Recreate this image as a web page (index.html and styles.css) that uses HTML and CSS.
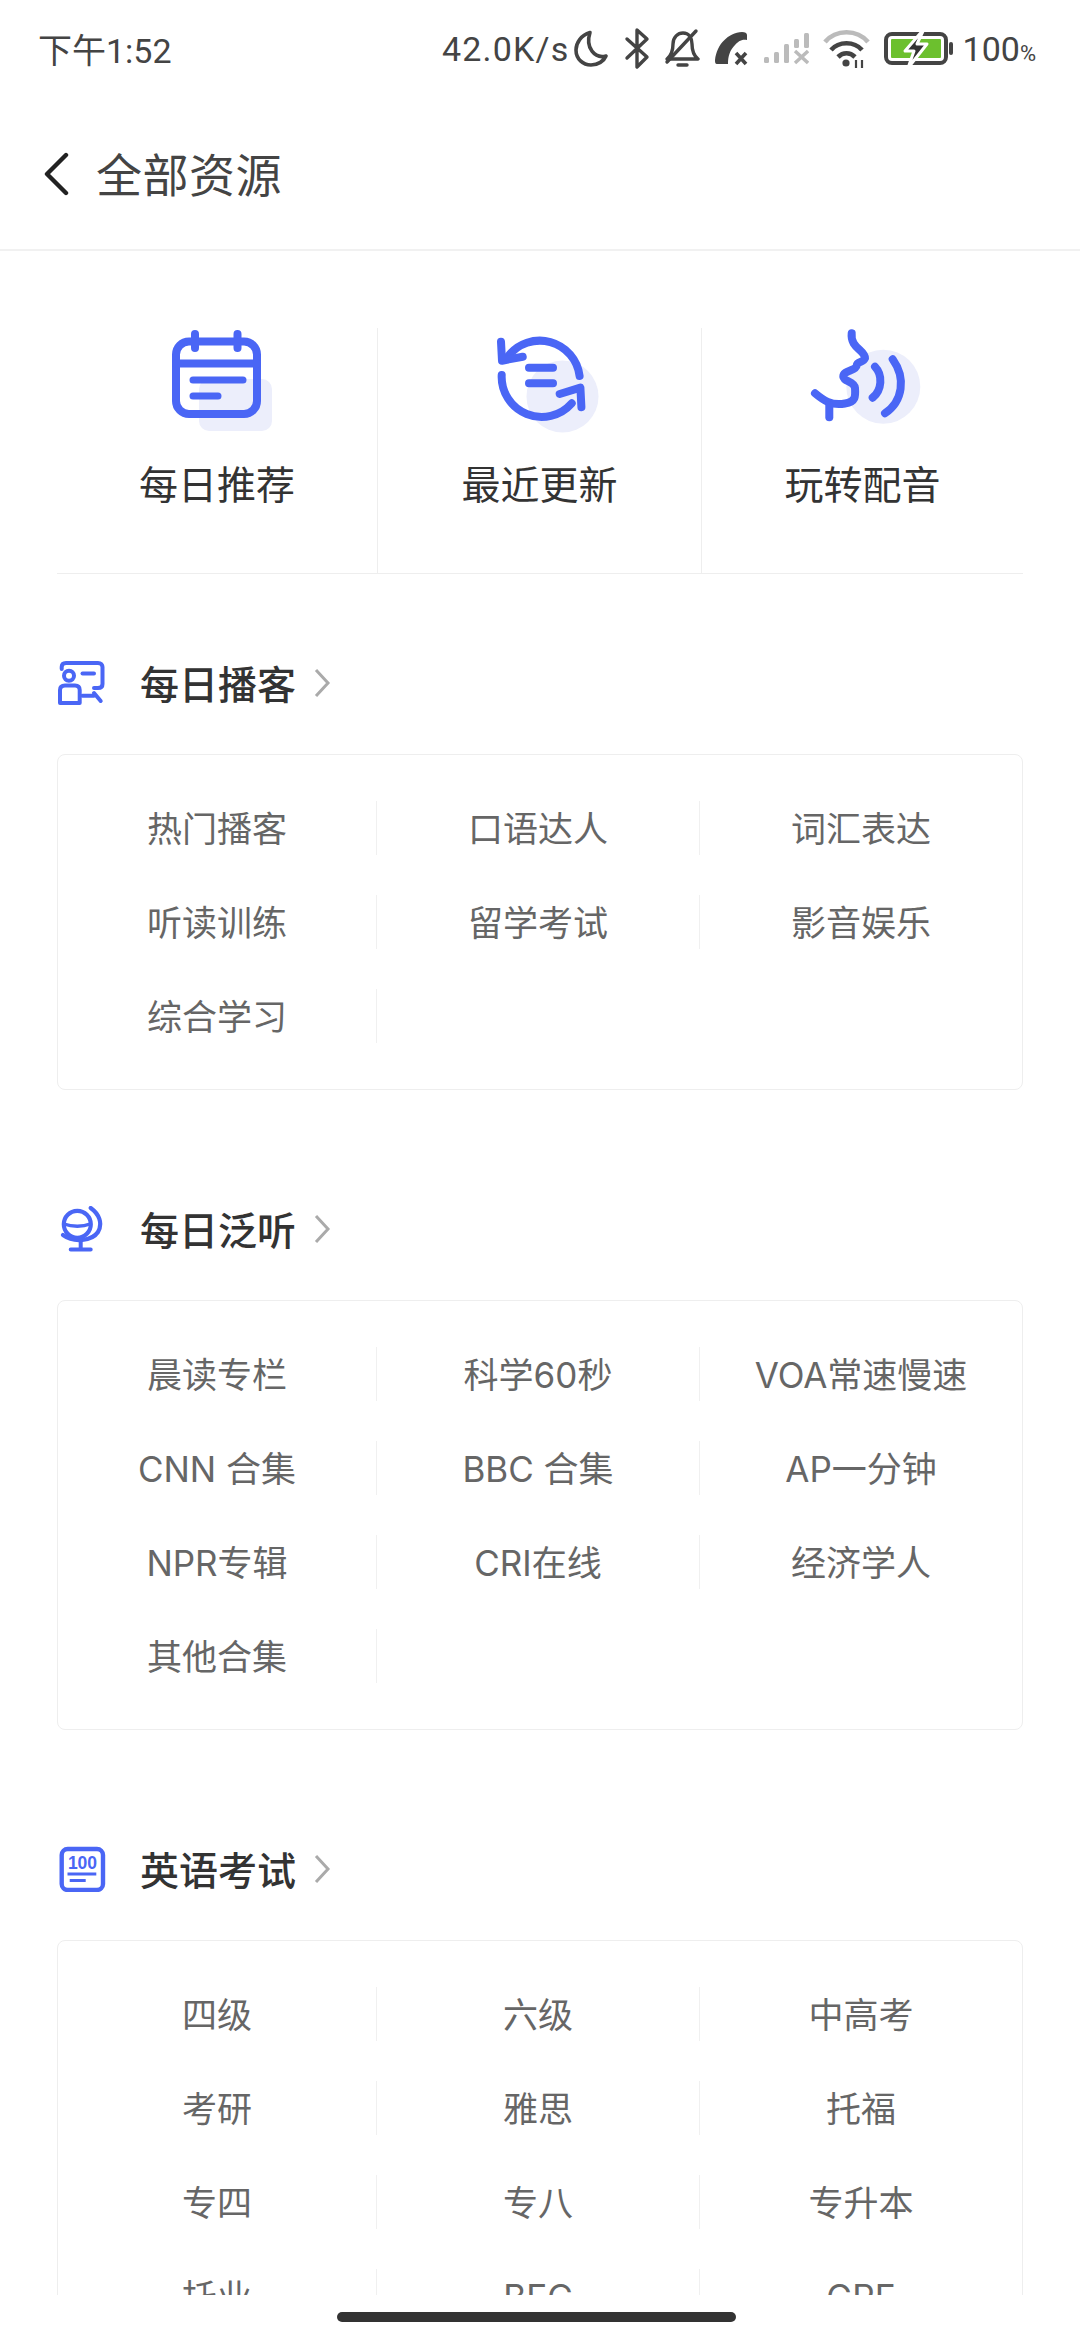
FILE: index.html
```html
<!DOCTYPE html>
<html lang="en">
<head>
    <meta charset="UTF-8">
    <meta name="viewport" content="width=device-width, initial-scale=1.0">
    <title>全部资源</title>
    <link rel="stylesheet" href="styles.css">
</head>
<body>
    <div class="status">
        <div class="time">下午1:52</div>
        <div class="status-right">
            <span class="speed">42.0K/s</span>
            <div class="status-icons">
                <svg width="37" height="50" viewBox="0 0 37 50"><path d="M17 8.5C8 11 3 19 3 26c0 9 7 15 15 15 7 0 13-4 15-9C22 35 12 24 17 8.5Z" fill="none" stroke="#444" stroke-width="3.6" stroke-linejoin="round"/></svg>
                <svg width="26" height="50" viewBox="0 0 26 50"><path d="M3 15 23 33 13 43V6L23 15 3 34" fill="none" stroke="#444" stroke-width="3.4" stroke-linejoin="round" stroke-linecap="round"/></svg>
                <svg width="36" height="50" viewBox="0 0 36 50"><path d="M3 35c5-4 6-9 6-15C9 13 14 9 19 9c6 0 9 5 9 11 0 6 1 11 6 15Z" fill="none" stroke="#444" stroke-width="3.4" stroke-linejoin="round"/><path d="M14 41h9" stroke="#444" stroke-width="3.4" stroke-linecap="round"/><path d="M3 38 32 7" stroke="#444" stroke-width="3.4" stroke-linecap="round"/></svg>
                <svg width="35" height="50" viewBox="0 0 35 50"><path d="M28 8C31 8 33 9 33 11V16C27 15 24 18 21 21 16 26 14 32 14 40H3C1 40 1 38 1 36 3 20 14 9 28 8Z" fill="#444"/><path d="M22 29 32 40M32 29 22 40" stroke="#444" stroke-width="3.6"/></svg>
                <svg width="46" height="50" viewBox="0 0 46 50"><g fill="#bbb"><rect x="1" y="33" width="5" height="6" rx="1.5"/><rect x="11" y="28" width="5" height="11" rx="1.5"/><rect x="21" y="20" width="5" height="19" rx="1.5"/><rect x="31" y="15" width="5" height="9" rx="1.5"/><rect x="41" y="9" width="5" height="15" rx="1.5"/></g><path d="M32 27 45 39M45 27 32 39" stroke="#bbb" stroke-width="3.4"/></svg>
                <svg width="47" height="50" viewBox="0 0 47 50"><g fill="none" stroke-width="4.600"><path d="M2 18C13 5 34 5 45 18" stroke="#bbb"/><path d="M8 26C16 17 31 17 39 26" stroke="#444"/><path d="M15 33C20 28 27 28 32 33" stroke="#444"/></g><circle cx="23" cy="39" r="3.6" fill="#444"/><path d="M33 36v8M39 36v8" stroke="#444" stroke-width="2.2"/></svg>
                <svg width="70" height="50" viewBox="0 0 70 50"><rect x="2" y="10" width="60" height="29" rx="6" fill="#fff" stroke="#444" stroke-width="4"/><rect x="7" y="15" width="50" height="19" rx="1" fill="#6cc02e"/><path d="M40 5 21 27h9l-6 17 19-24h-10Z" fill="#333" stroke="#fff" stroke-width="3" stroke-linejoin="round"/><rect x="65" y="18" width="4" height="13" rx="2" fill="#444"/></svg>
            </div>
            <span class="pct">100<small>%</small></span>
        </div>
    </div>

    <div class="nav">
        <svg class="back" width="26" height="44" viewBox="0 0 26 44"><path d="M23 3 4 22 23 41" fill="none" stroke="#222" stroke-width="4.4" stroke-linecap="round" stroke-linejoin="round"/></svg>
        <h1>全部资源</h1>
    </div>

    <div class="main">
        <div class="top-grid">
            <div class="top-item">
                <svg width="120" height="110" viewBox="0 0 120 110">
                    <rect x="42" y="51" width="73" height="52" rx="10" fill="#eceefb"/>
                    <g fill="none" stroke="#4a66f5" stroke-linecap="round">
                        <rect x="19" y="13.5" width="81" height="72.5" rx="13" stroke-width="8"/>
                        <path d="M38 6v14M80.500 6v14M19 35.500h81" stroke-width="8"/>
                        <path d="M36 52h50M36 68h25" stroke-width="7"/>
                    </g>
                </svg>
                <div class="top-label">每日推荐</div>
            </div>
            <div class="top-item">
                <svg width="120" height="110" viewBox="0 0 120 110">
                    <circle cx="82.500" cy="68.500" r="36" fill="#eceefb"/>
                    <g fill="none" stroke="#4a66f5" stroke-width="8" stroke-linecap="round" stroke-linejoin="round">
                        <path d="M28 28.500A40 40 0 0 1 99.600 48"/>
                        <path d="M21 13.700 22 32.700 42.700 28.700"/>
                        <path d="M21.700 47A40 40 0 0 0 91.700 75.300"/>
                        <path d="M79.700 66 100.400 59.700 101.400 79.300"/>
                        <path d="M49 39.700H73M49 55.300H73"/>
                    </g>
                </svg>
                <div class="top-label">最近更新</div>
            </div>
            <div class="top-item top-item-last">
                <svg width="120" height="110" viewBox="0 0 120 110">
                    <circle cx="80.300" cy="58.700" r="37" fill="#eceefb"/>
                    <g fill="none" stroke="#4a66f5" stroke-width="8" stroke-linecap="round" stroke-linejoin="round">
                        <path d="M48.700 5.300C47 20 62 22 62 30.300 60 35 54 33 53.700 37.500 53 43 40 42 40.300 48.700 41 54 51 53 52 60 52.500 68 53 74 42 75.500 28 78 20 72 12 65.300"/>
                        <path d="M26.300 77V89.300"/>
                        <path d="M72 38.700C80 47 79 62 69.700 69.700"/>
                        <path d="M89.700 31.300C103 50 100 73 82 85.300"/>
                    </g>
                </svg>
                <div class="top-label">玩转配音</div>
            </div>
        </div>

        <div class="section">
            <div class="section-head">
                <svg class="section-icon" width="50" height="46" viewBox="0 0 50 46">
                    <g fill="none" stroke="#4a66f5" stroke-width="4" stroke-linecap="round" stroke-linejoin="round">
                        <path d="M4.700 9V7C4.700 4 6.500 3 9 3H41C44 3 45.500 5 45.500 7V24C45.500 27 44 28 41 28H37"/>
                        <path d="M25.500 13.500H37"/>
                        <circle cx="12" cy="15.700" r="5"/>
                        <path d="M3 43V30C3 27 5 25.500 8 25.500H18C21 25.500 22.700 27 22.700 30V43Z"/>
                        <path d="M25.500 35.700H37M37 33 43.700 41"/>
                    </g>
                </svg>
                <span class="section-title">每日播客</span>
                <svg class="chevron" width="18" height="30" viewBox="0 0 18 30"><path d="M3 2 15 15 3 28" fill="none" stroke="#aaa" stroke-width="3"/></svg>
            </div>
            <div class="card">
                <div class="cell">热门播客</div>
                <div class="cell">口语达人</div>
                <div class="cell">词汇表达</div>
                <div class="cell">听读训练</div>
                <div class="cell">留学考试</div>
                <div class="cell">影音娱乐</div>
                <div class="cell">综合学习</div>
            </div>
        </div>

        <div class="section">
            <div class="section-head">
                <svg class="section-icon" width="50" height="46" viewBox="0 0 50 46">
                    <g fill="none" stroke="#4a66f5" stroke-linecap="round" stroke-linejoin="round">
                        <circle cx="20.300" cy="18.300" r="13.500" stroke-width="4.200"/>
                        <path d="M7 18C15 21 26 21 33 18" stroke-width="3.400"/>
                        <path d="M33.700 2C42 8 46 17 41 26 35 35 17 37 6 29" stroke-width="4.200"/>
                        <path d="M23.700 34V43M13.700 43.500H33.700" stroke-width="4"/>
                    </g>
                </svg>
                <span class="section-title">每日泛听</span>
                <svg class="chevron" width="18" height="30" viewBox="0 0 18 30"><path d="M3 2 15 15 3 28" fill="none" stroke="#aaa" stroke-width="3"/></svg>
            </div>
            <div class="card">
                <div class="cell">晨读专栏</div>
                <div class="cell">科学60秒</div>
                <div class="cell">VOA常速慢速</div>
                <div class="cell">CNN 合集</div>
                <div class="cell">BBC 合集</div>
                <div class="cell">AP一分钟</div>
                <div class="cell">NPR专辑</div>
                <div class="cell">CRI在线</div>
                <div class="cell">经济学人</div>
                <div class="cell">其他合集</div>
            </div>
        </div>

        <div class="section">
            <div class="section-head">
                <svg class="section-icon" width="50" height="46" viewBox="0 0 50 46">
                    <rect x="4.700" y="3" width="41.300" height="41" rx="6" fill="none" stroke="#4a66f5" stroke-width="4.400"/>
                    <text class="icon-text" x="25.500" y="22.500">100</text>
                    <path d="M10.500 28H39.300M12.700 34.500H28.700" stroke="#4a66f5" stroke-width="3.200"/>
                </svg>
                <span class="section-title">英语考试</span>
                <svg class="chevron" width="18" height="30" viewBox="0 0 18 30"><path d="M3 2 15 15 3 28" fill="none" stroke="#aaa" stroke-width="3"/></svg>
            </div>
            <div class="card">
                <div class="cell">四级</div>
                <div class="cell">六级</div>
                <div class="cell">中高考</div>
                <div class="cell">考研</div>
                <div class="cell">雅思</div>
                <div class="cell">托福</div>
                <div class="cell">专四</div>
                <div class="cell">专八</div>
                <div class="cell">专升本</div>
                <div class="cell">托业</div>
                <div class="cell">BEC</div>
                <div class="cell">GRE</div>
            </div>
        </div>
    </div>

    <div class="home-area">
        <div class="home-bar"></div>
    </div>
</body>
</html>
```

FILE: styles.css
```css
* {
    box-sizing: border-box;
}
body {
    font-family: "Noto Sans", "Noto Sans CJK SC", sans-serif;
    background: white;
    margin: 0;
    height: 2340px;
    overflow: hidden;
    display: flex;
    flex-direction: column;
}
.status {
    height: 98px;
    flex: none;
    display: flex;
    justify-content: space-between;
    align-items: center;
    padding: 0 44px 0 38px;
    color: #444;
    font-family: Roboto, "Noto Sans CJK SC", sans-serif;
    font-size: 34px;
}
.time {
    margin-bottom: 2px;
}
.status-right {
    display: flex;
    align-items: center;
}
.status-icons {
    display: flex;
    align-items: center;
    gap: 14px;
    margin: 0 9px 0 3px;
}
.speed {
    letter-spacing: 1.2px;
}
.pct small {
    font-size: 22px;
}
.nav {
    height: 153px;
    flex: none;
    display: flex;
    align-items: center;
    padding-left: 43px;
    border-bottom: 2px solid #f1f1f1;
}
.nav h1 {
    margin: 0 0 3px 27px;
    font-size: 46px;
    font-weight: 400;
    letter-spacing: 0.5px;
    color: #444;
}
.main {
    flex: 1;
    overflow: hidden;
    padding: 77px 57px 0;
}
.top-grid {
    display: grid;
    grid-template-columns: 321px 324px 321px;
    border-bottom: 1px solid #eee;
}
.top-item {
    height: 245px;
    border-right: 1px solid #eee;
    display: flex;
    flex-direction: column;
    align-items: center;
}
.top-item-last {
    border-right: none;
}
.top-label {
    margin-top: 21px;
    font-size: 39px;
    line-height: 50px;
    color: #333;
}
.section {
    margin-top: 84px;
}
.section + .section {
    margin-top: 114px;
}
.section-head {
    height: 50px;
    display: flex;
    align-items: center;
    margin-bottom: 46px;
}
.section-icon {
    margin-right: 33px;
    flex: none;
}
.icon-text {
    font-family: "Liberation Sans", sans-serif;
    font-size: 17.5px;
    font-weight: 700;
    fill: #4a66f5;
    text-anchor: middle;
}
.section-title {
    font-size: 39px;
    font-weight: 500;
    color: #333;
    margin-bottom: 3px;
}
.chevron {
    margin-left: 17px;
}
.card {
    border: 1px solid #eee;
    border-radius: 8px;
    padding: 46px 0;
    display: grid;
    grid-template-columns: 319px 323px 322px;
    row-gap: 40px;
}
.cell {
    height: 54px;
    line-height: 57px;
    text-align: center;
    font-family: Inter, "Noto Sans CJK SC", sans-serif;
    font-size: 35px;
    color: #666;
    border-right: 1px solid #f0f0f0;
}
.cell:nth-child(3n) {
    border-right: none;
}
.home-area {
    height: 45px;
    flex: none;
    background: white;
    padding: 17px 8px 0 0;
    display: flex;
    justify-content: center;
}
.home-bar {
    width: 399px;
    height: 10px;
    border-radius: 5px;
    background: #333;
}
```
